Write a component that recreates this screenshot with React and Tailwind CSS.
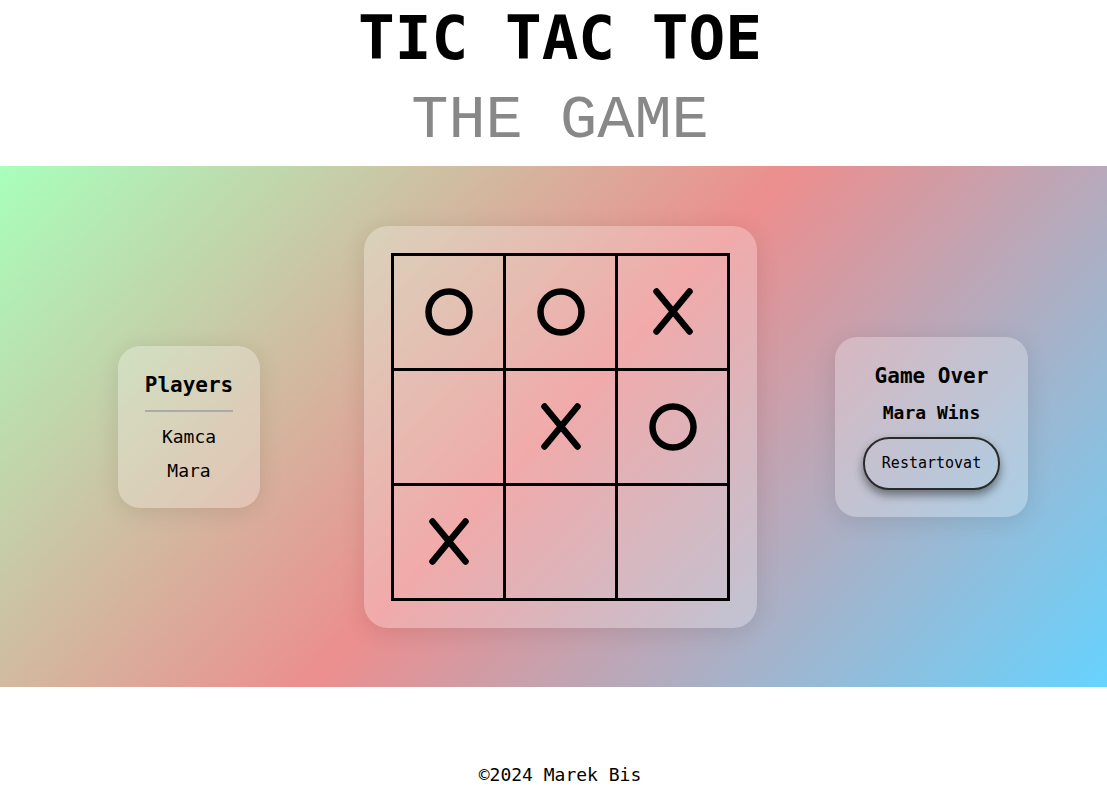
const board = ['O', 'O', 'X', '', 'X', 'O', 'X', '', ''];

const font = { fontFamily: '"DejaVu Sans Mono", "Liberation Mono", monospace' };

const Mark = ({ value }) => {
  if (value === 'X') {
    return (
      <svg width="40" height="47" viewBox="0 0 40 47">
        <line x1="3.5" y1="3.5" x2="36.5" y2="43.5" stroke="black" strokeWidth="6.5" strokeLinecap="round" />
        <line x1="36.5" y1="3.5" x2="3.5" y2="43.5" stroke="black" strokeWidth="6.5" strokeLinecap="round" />
      </svg>
    );
  }
  if (value === 'O') {
    return (
      <svg width="48" height="48" viewBox="0 0 48 48">
        <circle cx="24" cy="24" r="20.5" fill="none" stroke="black" strokeWidth="6.5" />
      </svg>
    );
  }
  return null;
};

// inner lines: right/bottom borders on all but the last column/row
const cellBorders = [
  'border-r-[3px] border-b-[3px]',
  'border-r-[3px] border-b-[3px]',
  'border-b-[3px]',
  'border-r-[3px] border-b-[3px]',
  'border-r-[3px] border-b-[3px]',
  'border-b-[3px]',
  'border-r-[3px]',
  'border-r-[3px]',
  '',
];

export default function App() {
  return (
    <div className="min-h-screen bg-white text-black" style={font}>
      {/* Header */}
      <header className="flex flex-col items-center pl-[13px]">
        <h1 className="text-[61px] font-bold leading-[75px]">TIC TAC TOE</h1>
        <h2 className="text-[62px] font-light leading-[91px] text-[#888888]" style={{ fontFamily: '"Liberation Mono", monospace' }}>
          THE GAME
        </h2>
      </header>

      {/* Game band */}
      <main className="h-[521px] flex items-center pl-[118px] bg-[linear-gradient(133deg,#a8ffbc_0%,#ec8e8e_50%,#66d3ff_100%)]">
        {/* Players */}
        <div className="w-[142px] px-[27px] pt-[24px] pb-[24px] rounded-[22px] bg-white/25 shadow-[0_4px_24px_rgba(0,0,0,0.1)] flex flex-col items-center">
          <h3 className="text-[21px] font-bold leading-[31px]">Players</h3>
          <div className="w-full h-[2px] bg-[#aaaaaa] mt-[9px] mb-[11px]" />
          <div className="flex flex-col items-center gap-[7px] text-[18px] leading-[27px]">
            <span>Kamca</span>
            <span>Mara</span>
          </div>
        </div>

        {/* Board */}
        <div className="ml-[104px] p-[27px] rounded-[24px] bg-white/25 shadow-[0_4px_24px_rgba(0,0,0,0.1)]">
          <div className="grid grid-cols-[112px_112px_109px] grid-rows-[115px_115px_112px] border-[3px] border-black">
            {board.map((v, i) => (
              <div key={i} className={`flex items-center justify-center border-black ${cellBorders[i]}`}>
                <Mark value={v} />
              </div>
            ))}
          </div>
        </div>

        {/* Status */}
        <div className="ml-[78px] w-[193px] px-[28px] pt-[24px] pb-[27px] rounded-[22px] bg-white/25 shadow-[0_4px_24px_rgba(0,0,0,0.1)] flex flex-col items-center">
          <h3 className="text-[21px] font-bold leading-[31px]">Game Over</h3>
          <p className="mt-[7px] text-[18px] font-bold leading-[27px]">Mara Wins</p>
          <button className="mt-[11px] w-[137px] h-[53px] rounded-[26px] border-2 border-[#2a2a2a] bg-transparent text-[15px] shadow-[0_5px_10px_rgba(0,0,0,0.45)]" style={font}>
            Restartovat
          </button>
        </div>
      </main>

      {/* Footer */}
      <footer className="flex justify-center pl-[13px] pt-[74px]">
        <p className="text-[18px] leading-[27px]">©2024 Marek Bis</p>
      </footer>
    </div>
  );
}
